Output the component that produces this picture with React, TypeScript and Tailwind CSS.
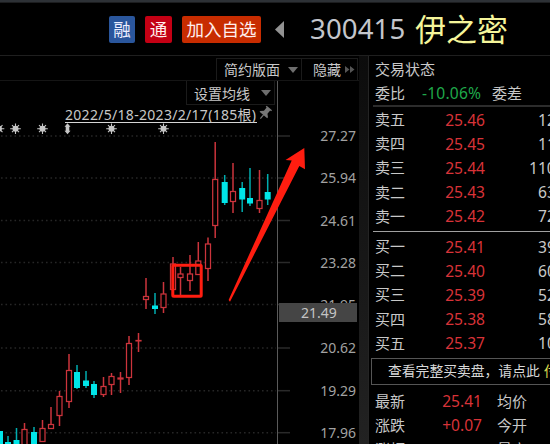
import React from "react";

type Candle = {
  x: number;
  high: number;
  low: number;
  top: number;
  bottom: number;
  up: boolean;
};

const c = (x: number, high: number, top: number, bottom: number, low: number, up = true): Candle => ({
  x, high, top, bottom, low, up,
});

const candles: Candle[] = [
  c(0, 431, 431, 444, 444, false),
  c(8, 436, 442, 446, 446, false),
  c(16.5, 428, 440, 446, 446, false),
  c(24.5, 423, 429, 448, 448),
  c(34, 427, 432, 446, 446, false),
  c(42.5, 420, 428, 442, 442),
  c(51, 407, 424, 429, 429),
  c(59.5, 391, 396, 416, 426),
  c(69, 354, 370, 402, 408),
  c(77, 365, 372, 388, 389, false),
  c(86, 371, 380.5, 386, 388, false),
  c(94, 381, 384, 395, 398, false),
  c(103.5, 377, 386, 395, 397),
  c(111.5, 373, 376, 385, 395),
  c(120.5, 372, 377.5, 379.5, 393),
  c(129, 336, 343, 378, 385),
  c(138.5, 333, 340, 341, 352),
  c(146, 278, 296, 300, 309),
  c(155, 293, 305.5, 309, 314, false),
  c(163.5, 282, 293.5, 308, 313),
  c(173, 257, 263.5, 290, 290),
  c(180.5, 267, 273.5, 278, 295),
  c(190, 255, 273.5, 281, 291),
  c(198.3, 242, 260.5, 275, 275),
  c(208, 237.5, 243.5, 269, 281),
  c(215.2, 142, 179, 226, 238),
  c(224.7, 175, 182, 203, 205, false),
  c(233, 163, 191, 202, 213),
  c(242.2, 182, 188, 199.5, 212, false),
  c(250, 168, 198, 203.5, 206, false),
  c(259.5, 170, 200, 209, 213),
  c(267.7, 174, 192, 199.5, 205, false),
];

const prices = ["27.27", "25.94", "24.61", "23.28", "21.95", "20.62", "19.29", "17.96"];
const gridY = [136, 178, 220.5, 262.5, 304.5, 348, 390.7, 432.7];

const latin = "font-['Noto_Sans','Noto_Sans_CJK_SC',sans-serif]";
const cjk = "font-['Noto_Sans_CJK_SC',sans-serif]";

function CandleShape({ k }: { k: Candle }) {
  if (!k.up) {
    return (
      <g fill="#00e5e8">
        <rect x={k.x - 0.75} y={k.high} width={1.5} height={k.low - k.high} opacity={0.75} />
        <rect x={k.x - 3} y={k.top} width={6} height={k.bottom - k.top} />
      </g>
    );
  }
  return (
    <g stroke="#cc343c" fill="#000">
      <line x1={k.x} x2={k.x} y1={k.high} y2={k.low} strokeWidth={1.5} />
      <rect x={k.x - 2.5} y={k.top + 0.5} width={5} height={Math.max(k.bottom - k.top - 1, 0.4)} strokeWidth={1.25} />
    </g>
  );
}

function Star({ x, narrow }: { x: number; narrow?: boolean }) {
  const y = 128.7;
  if (narrow) {
    return (
      <g fill="#c6c6c6">
        <path d={`M${x} ${y - 5.5}l3 3.5h-1.2v4h1.2l-3 3.5-3-3.5h1.2v-4h-1.2z`} />
      </g>
    );
  }
  return (
    <g stroke="#c6c6c6" fill="#c6c6c6" strokeWidth={1.1}>
      <circle cx={x} cy={y} r={3} stroke="none" />
      <path
        d={`M${x - 5.3} ${y}h10.6M${x} ${y - 5.3}v10.6M${x - 3.5} ${y - 3.5}l7 7M${x + 3.5} ${y - 3.5}l-7 7`}
      />
    </g>
  );
}

function Plot() {
  return (
    <svg className="block" width="359" height="363" viewBox="0 81 359 363">
      {gridY.map((y) => (
        <g key={y}>
          <line x1={1} x2={276} y1={y} y2={y} stroke="#262626" strokeWidth={1.5} strokeDasharray="1.6 2.9" />
          <line x1={278} x2={290} y1={y} y2={y} stroke="#2a2a2a" strokeWidth={1.5} />
        </g>
      ))}
      <rect x={277} y={81} width={1} height={363} fill="#5a5a5a" />
      {[-1, 15.5, 42.5, 111.5, 163.5].map((x) => (
        <Star key={x} x={x} />
      ))}
      <Star x={67.5} narrow />
      {candles.map((k) => (
        <CandleShape key={k.x} k={k} />
      ))}
      <g className="font-['Noto_Sans',sans-serif] text-[14px]" fill="#a2a2a2" textAnchor="end">
        {prices.map((p, i) => (
          <text key={p} x={356} y={gridY[i] + 5.2}>{p}</text>
        ))}
      </g>
      <rect x={172.8} y={265.2} width={28.4} height={31} rx={1} fill="none" stroke="#ff1d10" strokeWidth={3} />
      <path d="M304.3 148L285.5 160l6.2 .6L228.6 300l1.4 1.8L299.3 166l5.7 3.2z" fill="#ff1d10" />
      <g fill="#777" transform="translate(265.5 112.5) rotate(40)">
        <path d="M-3.5-6h7v1.5h-1.2v4.2l2.7 2.4v1.2h-10v-1.2l2.7-2.4v-4.2h-1.2z" />
        <path d="M-.6 3h1.2v5h-1.2z" />
      </g>
    </svg>
  );
}

function Caret() {
  return (
    <svg width="10" height="6" viewBox="0 0 10 6" fill="#6e6e6e">
      <path d="M0 0h10L5 6z" />
    </svg>
  );
}

function Row({ label, value, extra, pad }: { label: string; value: string; extra: string; pad: string }) {
  return (
    <div className="flex h-[24.2px] items-center whitespace-nowrap pl-[6px] leading-6">
      <span className={`w-[30px] text-[15px] text-[#c8c8c8] ${cjk}`}>{label}</span>
      <span className={`w-20 shrink-0 pt-px text-right text-[15.6px] text-[#d83338] ${latin}`}>{value}</span>
      <span className={`${pad} pt-px text-[15.6px] text-[#c8c8c8] ${latin}`}>{extra}</span>
    </div>
  );
}

function StatRow({ label, value, extra }: { label: string; value: string; extra: string }) {
  return (
    <div className="flex h-[24.2px] items-center whitespace-nowrap pl-[6px] leading-6">
      <span className={`w-[30px] text-[15px] text-[#c8c8c8] ${cjk}`}>{label}</span>
      <span className={`w-[77px] shrink-0 text-right text-[15.6px] text-[#d83338] ${latin}`}>{value}</span>
      <span className={`ml-[15px] text-[15px] text-[#c8c8c8] ${cjk}`}>{extra}</span>
    </div>
  );
}

export default function App() {
  return (
    <div className="flex h-[444px] w-[550px] flex-col overflow-hidden bg-black">
      <div className="h-[3px] shrink-0 border-b border-[#1c1d1f] bg-[#2d3136]" />
      <header className="flex h-[53px] shrink-0 items-center whitespace-nowrap border-b border-[#1f1f1f] pl-[109px]">
        <span className={`flex h-[27px] w-[26px] items-center justify-center rounded-xs bg-[#2a569c] text-[17.5px] text-[#eef] ${cjk}`}>融</span>
        <span className={`ml-[10px] flex h-[27px] w-[27px] items-center justify-center rounded-xs bg-[#c40014] text-[17.5px] text-[#fee] ${cjk}`}>通</span>
        <span className={`ml-[10px] flex h-[27px] w-[79px] items-center justify-center rounded-xs bg-[#c82c00] text-[17.5px] text-[#fee] ${cjk}`}>加入自选</span>
        <svg className="ml-[14px]" width="9" height="17" viewBox="0 0 9 17" fill="#929292">
          <path d="M9 0v17L0 8.500z" />
        </svg>
        <span className="ml-[26px] w-[105px] font-['Noto_Sans',sans-serif] text-[27.6px] tracking-[0.1px] text-[#c4c6cc]">300415</span>
        <span className={`pb-[2px] text-[31px] text-[#f5f59a] ${cjk}`}>伊之密</span>
      </header>

      <div className="flex min-h-0 flex-1">
        <section className="w-[359px] shrink-0">
          <div className={`flex h-[25px] justify-end border-b border-[#151515] pr-[1px] pt-[2px] text-[14px] text-[#c8c8c8] ${cjk}`}>
            <div className="flex w-[86px] items-center justify-between border border-b-0 border-[#1b1b1b] pl-[7px] pr-[3px]">
              <span>简约版面</span>
              <Caret />
            </div>
            <div className="flex w-[56px] items-center justify-between border border-b-0 border-l-0 border-[#1b1b1b] pl-[11px] pr-[2px]">
              <span>隐藏</span>
              <svg width="10" height="7" viewBox="0 0 10 7" fill="#555">
                <path d="M0 0l4.500 3.500L0 7zM5 0l4.500 3.500L5 7z" />
              </svg>
            </div>
          </div>
          <div className="relative">
            <Plot />
            <div className={`absolute left-[186px] top-0 flex h-[24px] w-[89px] items-center justify-between border border-t-0 border-[#1b1b1b] bg-black pb-px pl-[7px] pr-[3px] pt-[2px] text-[14px] text-[#c8c8c8] ${cjk}`}>
              <span>设置均线</span>
              <Caret />
            </div>
            <div className={`absolute left-[65px] top-[25px] h-[17px] w-[192px] whitespace-nowrap border-b border-[#d5d5d5] text-[14px] leading-[18px] tracking-[0.3px] text-[#c8c8c8] ${latin}`}>
              2022/5/18-2023/2/17(185根)
            </div>
            <div className="absolute left-[279px] top-[222px] flex h-[19px] w-[78px] items-center justify-center bg-[#454545] pl-[2px] font-['Noto_Sans',sans-serif] text-[14px] text-[#c4c4c4]">
              21.49
            </div>
          </div>
        </section>

        <div className="w-[10px] shrink-0 border-r border-[#242424] bg-linear-to-b from-[#0c0c0c] to-[#222]" />

        <section className="min-w-0 flex-1 overflow-hidden">
          <div className={`h-[25px] pl-[6px] text-[15px] leading-[26px] text-[#c8c8c8] ${cjk}`}>交易状态</div>
          <div className="flex h-[24px] items-center whitespace-nowrap pl-[6px]">
            <span className={`w-[47px] text-[15px] text-[#c8c8c8] ${cjk}`}>委比</span>
            <span className={`w-[70px] pt-[2px] text-[15.6px] tracking-[0.2px] text-[#1fa84a] ${latin}`}>-10.06%</span>
            <span className={`text-[15px] text-[#c8c8c8] ${cjk}`}>委差</span>
          </div>
          <div className="ml-1 h-[2px] bg-[#2c2c2c]" />
          <Row label="卖五" value="25.46" extra="12" pad="pl-[53px]" />
          <Row label="卖四" value="25.45" extra="11" pad="pl-[53px]" />
          <Row label="卖三" value="25.44" extra="110" pad="pl-[44px]" />
          <Row label="卖二" value="25.43" extra="63" pad="pl-[53px]" />
          <Row label="卖一" value="25.42" extra="72" pad="pl-[53px]" />
          <div className="mb-[2px] ml-1 mt-[3px] h-px bg-[#a0a0a0]" />
          <Row label="买一" value="25.41" extra="39" pad="pl-[53px]" />
          <Row label="买二" value="25.40" extra="60" pad="pl-[53px]" />
          <Row label="买三" value="25.39" extra="52" pad="pl-[53px]" />
          <Row label="买四" value="25.38" extra="58" pad="pl-[53px]" />
          <Row label="买五" value="25.37" extra="10" pad="pl-[53px]" />
          <div className={`mb-[4px] ml-[2px] mt-[3px] flex h-[27px] items-center whitespace-nowrap border border-r-0 border-[#555] pb-[2px] pl-4 text-[13.8px] text-[#d8d8d8] ${cjk}`}>
            查看完整买卖盘，请点此
            <span className="ml-1 text-[#dede50]">付</span>
          </div>
          <StatRow label="最新" value="25.41" extra="均价" />
          <StatRow label="涨跌" value="+0.07" extra="今开" />
          <StatRow label="涨幅" value="" extra="最高" />
        </section>
      </div>
    </div>
  );
}
